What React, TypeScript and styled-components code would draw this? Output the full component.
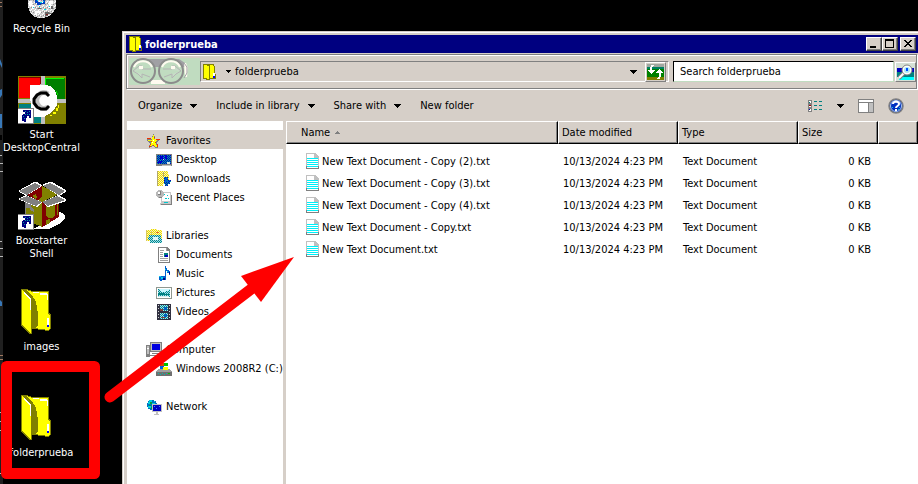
import React from "react";
import styled, { createGlobalStyle, css } from "styled-components";

const face = "#d6cfc8";
const navy = "#000080";
const shade = "#808080";

const GlobalStyle = createGlobalStyle`
  *, *::before, *::after { box-sizing: border-box; }
  body {
    margin: 0;
    background: #000;
    color: #000;
    font: 11px/13px "DejaVu Sans Condensed", "Liberation Sans", sans-serif;
  }
  button, input { font: inherit; color: inherit; }
  svg { display: block; flex: none; }
`;

const Screen = styled.div`
  position: relative;
  display: flex;
  min-height: 100vh;
  background: #000;
  overflow: hidden;
`;

const Edge = styled.div`
  flex: 0 0 3px;
  overflow: hidden;
  background: #202020;
`;

const Desktop = styled.nav`
  flex: 0 0 119px;
  height: 100vh;
  overflow: hidden;
`;

const Shortcuts = styled.ul`
  list-style: none;
  width: 77px;
  margin: -30px 0 0;
  padding: 0;
`;

const ShortcutItem = styled.li`
  height: 106px;
`;

const Shortcut = styled.a`
  display: flex;
  flex-direction: column;
  align-items: center;
  gap: 4px;
  color: #fff;
  text-align: center;
  text-decoration: none;
  white-space: pre-line;
`;

const Window = styled.main`
  flex: 1;
  min-width: 0;
  display: flex;
  flex-direction: column;
  margin-top: 31px;
  padding: 2px 0 0 2px;
  border: solid ${face};
  border-width: 1px 0 0 1px;
  background: ${face};
  box-shadow: inset 1px 1px #fff;
`;

const TitleBar = styled.header`
  display: flex;
  align-items: center;
  gap: 2px;
  height: 18px;
  margin: 1px 0 1px 1px;
  padding: 0 2px;
  background: ${navy};
`;

const Title = styled.h1`
  flex: 1;
  margin: 0;
  color: #fff;
  font-size: 11px;
  font-weight: bold;
`;

const raised = css`
  border: 1px solid;
  border-color: #fff #404040 #404040 #fff;
  background: ${face};
  box-shadow: inset -1px -1px ${shade};
`;

const CaptionButton = styled.button<{ $apart?: boolean }>`
  ${raised}
  display: grid;
  place-items: center;
  width: 16px;
  height: 14px;
  margin-left: ${(p) => (p.$apart ? 2 : 0)}px;
  padding: 0;
`;

const CaptionButtons = styled.div`
  display: flex;
`;

const AddressBand = styled.div`
  display: flex;
  align-items: center;
  height: 35px;
  margin: 0 1px 1px 1px;
  padding-left: 2px;
  border: 1px solid ${shade};
  box-shadow: inset 1px 1px #fff, 1px 1px #fff;
`;

const Travel = styled.div`
  display: flex;
  background: #c0dcc0;
`;

const PlainButton = styled.button`
  display: flex;
  align-items: center;
  gap: 8px;
  padding: 0;
  border: 0;
  background: none;
  white-space: nowrap;
`;

const AddressBox = styled.div`
  flex: 1;
  display: flex;
  align-items: center;
  height: 21px;
  padding: 0 2px 0 1px;
  border: 1px solid;
  border-color: ${shade} #fff #fff ${shade};
`;

const Crumb = styled.a`
  flex: 1;
  margin-left: 4px;
  color: inherit;
  text-decoration: none;
`;

const ToolButton = styled.button`
  ${raised}
  border-color: #fff ${shade} ${shade} #fff;
  box-shadow: none;
  display: grid;
  place-items: center;
  width: 21px;
  height: 20px;
  padding: 0;
`;

const CrumbArrow = styled.div`
  margin-left: 9px;
`;

const SearchForm = styled.form`
  flex: 0 0 243px;
  display: flex;
  align-items: center;
  gap: 1px;
  margin-left: 4px;
`;

const SearchInput = styled.input`
  flex: 1;
  min-width: 0;
  height: 21px;
  padding: 0 6px;
  border: 1px solid;
  border-color: #000 #c0dcc0 #c0dcc0 #000;
  border-radius: 0;
  background: #fff;
  &::placeholder { color: #000; opacity: 1; }
`;

const CommandBar = styled.div`
  display: flex;
  align-items: center;
  gap: 19px;
  height: 31px;
  padding: 0 14px 0 13px;
`;

const ViewTools = styled.div`
  display: flex;
  align-items: center;
  gap: 14px;
  margin-left: auto;
`;

const Body = styled.div`
  flex: 1;
  display: flex;
  gap: 3px;
  padding-left: 2px;
`;

const NavPane = styled.nav`
  flex: 0 0 156px;
  padding-top: 9px;
  background: #fff;
`;

const Group = styled.ul`
  list-style: none;
  margin: 0 0 19px;
  padding: 0;
`;

const Place = styled.a<{ $child?: boolean; $selected?: boolean }>`
  display: flex;
  align-items: center;
  gap: 4px;
  height: 19px;
  padding-top: 2px;
  padding-left: ${(p) => (p.$child ? 29 : 19)}px;
  background: ${(p) => (p.$selected ? face : "none")};
  color: inherit;
  text-decoration: none;
  white-space: nowrap;
`;

const Listing = styled.section`
  flex: 1;
  min-width: 0;
  background: #fff;
`;

const Table = styled.table`
  width: 100%;
  table-layout: fixed;
  border-collapse: separate;
  border-spacing: 0;
  thead::after { content: ""; display: block; height: 6px; }
`;

const Col = styled.col<{ $w?: number }>`
  width: ${(p) => (p.$w ? `${p.$w}px` : "auto")};
`;

const HeadCell = styled.th<{ $wide?: boolean }>`
  height: 23px;
  padding: 0 0 0 ${(p) => (p.$wide ? 14 : 3)}px;
  border: 1px solid;
  border-color: #fff #000 #000 #fff;
  background: ${face};
  box-shadow: inset -1px -1px ${shade};
  font-weight: normal;
  text-align: left;
`;

const SortLabel = styled.span`
  display: flex;
  align-items: center;
  gap: 5px;
`;

const Cell = styled.td<{ $right?: boolean }>`
  height: 22px;
  padding: 0 ${(p) => (p.$right ? 7 : 0)}px 0 5px;
  text-align: ${(p) => (p.$right ? "right" : "left")};
  white-space: nowrap;
`;

const FileName = styled.a`
  display: flex;
  align-items: center;
  gap: 3px;
  padding-left: 15px;
  color: inherit;
  text-decoration: none;
`;

const Markup = styled.svg`
  position: absolute;
  top: 0;
  left: 0;
  pointer-events: none;
`;

/* ---------- drawings ---------- */

const Px = ({ w = 16, h = 16, children }: { w?: number; h?: number; children: React.ReactNode }) => (
  <svg width={w} height={h} viewBox={`0 0 ${w} ${h}`} shapeRendering="crispEdges" aria-hidden="true">
    {children}
  </svg>
);

const Patterns = () => (
  <defs>
    <pattern id="blueDither" width="2" height="2" patternUnits="userSpaceOnUse">
      <path fill="#0000c0" d="M0 0h2v2H0z" />
      <path fill="#00a0a0" d="M0 0h1v1H0zM1 1h1v1H1z" />
    </pattern>
    <pattern id="yellowDither" width="2" height="2" patternUnits="userSpaceOnUse">
      <path fill="#fff6b0" d="M0 0h2v2H0z" />
      <path fill="#e8d800" d="M0 0h1v1H0zM1 1h1v1H1z" />
    </pattern>
    <pattern id="cyanDither" width="2" height="2" patternUnits="userSpaceOnUse">
      <path fill="#a8e0e8" d="M0 0h2v2H0z" />
      <path fill="#008890" d="M0 0h1v1H0zM1 1h1v1H1z" />
    </pattern>
    <pattern id="grayDither" width="4" height="4" patternUnits="userSpaceOnUse">
      <path fill="#d0d0d0" d="M0 0h4v4H0z" />
      <path fill="#fff" d="M0 0h1v1H0zM2 1h1v1H2zM1 3h1v1H1z" />
      <path fill="#909090" d="M3 2h1v1H3zM1 1h1v1H1z" />
    </pattern>
  </defs>
);

const Down = () => (
  <Px w={7} h={4}><path d="M0 0h7v1H0zM1 1h5v1H1zM2 2h3v1H2zM3 3h1v1H3z" /></Px>
);
const SmallDown = () => (
  <Px w={5} h={3}><path d="M0 0h5v1H0zM1 1h3v1H1zM2 2h1v1H2z" /></Px>
);
const SortUp = () => (
  <Px w={5} h={3}><path fill={shade} d="M2 0h1v1H2zM1 1h3v1H1zM0 2h5v1H0z" /></Px>
);

const SmallFolder = () => (
  <Px w={15} h={16}>
    <path fill="#808000" d="M1 0h11v2h1v8h1v5H8v1H4v-1H1z" />
    <path fill="#ff0" d="M2 1h3v13H2zM5 2h2v13H5zM8 1h3v13H8zM11 2h1v9h1v3h-2z" />
    <path fill="#fff" d="M11 9h2v4h-2z" />
    <path fill="#00f" d="M11 12h2v2h-2z" />
  </Px>
);

const BigFolder = () => (
  <Px w={48} h={48}>
    <path fill="#808000" d="M3 1h6l5 2h17v22l2 2v13l-3 3-13-2h-3v5h-2L3 38z" />
    <path fill="#ff0" d="M8 2l6 2h16v22l2 2v12l-2 2-13-2 3-3V26l-2-12-4-7z" />
    <path fill="#ff0" d="M4 2l5 4 4 6v33L4 37z" />
    <path fill="#fff" d="M6 4h1v1h1v1h1v1h1v1h1v1h1v1h1v12h-1V11h-1v-1h-1V9H9V8H8V7H7V6H6zM15 4h6v1h-6zM22 5h7v1h1v6h-1V7h-7zM29 30h2v7h-2z" />
    <path fill="#00f" d="M29 37h2v2h-2z" />
  </Px>
);

const ShortcutArrow = () => (
  <g>
    <path fill="#808080" d="M0 32h16v16H0z" />
    <path fill="#fff" d="M0 33h15v14H0z" />
    <path fill="#000080" d="M5 34h8v8h-2v-2H9v2H8v4H6v-1H4v-4l1-3h2v-2H5z" />
    <path fill="#00a0a0" d="M7 35h1v1H7zM9 36h1v1H9zM11 35h1v1h-1zM11 38h1v1h-1zM7 38h1v1H7zM5 40h1v1H5zM6 42h1v1H6zM9 38h1v1H9z" />
  </g>
);

const RecycleBin = () => (
  <Px w={48} h={48}>
    <Patterns />
    <path fill="#b8b8b8" d="M10 26h28v12l-3 5-4 3-5 2h-6l-5-2-3-4-2-6z" />
    <path fill="url(#grayDither)" d="M10 30h28v8l-3 5-4 3-5 2h-6l-5-2-3-4-2-6z" />
    <path fill="#fff" d="M11 31h3v4h2v4h-2v-3h-3zM31 31h4v3h-2v4h-2zM17 41h6v2h-4v2h-2z" />
    <path fill="#0040c0" d="M17 29h3v3h2v1h3v-3h2v4h-4v1h-4v-2h-2z" />
    <path fill="#00d8e8" d="M19 30h1v1h-1zM22 32h2v1h-2zM25 31h1v1h-1zM26 39h2v1h-2zM15 37h1v1h-1zM31 36h1v1h-1zM21 36h1v1h-1z" />
    <path fill="#666" d="M27 42h4v1h3v1h-4v2h-3zM20 38h3v1h-3zM33 36h2v3h-2z" />
    <path fill="#802020" d="M28 44h2v1h-2z" />
  </Px>
);

const DesktopCentral = () => (
  <Px w={48} h={48}>
    <path fill="#808000" d="M0 0h48v48H0z" />
    <path fill="#c0c0c0" d="M23 0h4v48h-4zM0 23h48v4H0z" />
    <path fill="#f00" d="M1 2h21v7H12v13H1z" />
    <path fill="#800000" d="M1 1h22v1H1zM22 2h1v6h-1z" />
    <path fill="#008000" d="M27 2h20v21H27z" />
    <path fill="#0f0" d="M27 2h19v1H28v6h-1z" />
    <path fill="#008080" d="M1 28h22v19H1z" />
    <path fill="#808000" d="M27 27h20v20H27z" />
    <path fill="#c0c0c0" d="M22 8h5v33h-5z" />
    <path fill="#fff" d="M12 9h17l5 2 3 4 2 5v9l-3 5-5 4-5 3H13z" />
    <path fill="#0d0" d="M39 17h1v2h-1zM38 15h1v2h-1z" />
    <path fill="#ff0" d="M40 29h1v3h-1zM38 32h2v3h-2zM35 36h3v2h-3zM32 39h2v1h-2z" />
    <g fill="none" shapeRendering="auto">
      <path stroke="#c0c0c0" strokeWidth="5" d="M30 18a7 8 0 1 0 0 13" />
      <path stroke="#000" strokeWidth="3" d="M31 20l-3-3h-5l-4 2-3 4v4l3 4 4 2h5l3-3" />
    </g>
    <ShortcutArrow />
  </Px>
);

const Box = () => (
  <Px w={48} h={48}>
    <path fill="#fff" d="M40 30l5 1 2 3v3l-6 5-10 5H15l8-4z" />
    <path fill="#808000" d="M7 18l17 3v24L8 38z" />
    <path fill="#800000" d="M24 20l17-6v21l-17 10z" />
    <path fill="#808000" d="M28 23l9-3v13l-3 3h-3l-3-2zM28 38l4-1v4l-4 2zM39 21h1v12h-1z" />
    <path fill="#808080" d="M7 20h6v5l3 2v3l-4-2v-2H8v10H7z" />
    <path fill="#808000" d="M9 13l15-9 17 8-17 8z" />
    <path fill="#800000" d="M9 13l15-9v10l-4 5z" />
    <path fill="#808000" d="M14 14l4-2 1 3-2 2z" />
    <path fill="#c0c0c0" d="M0 8L17 0l8 3 7-3 16 8v2l-5 4 5 3v2l-18 6-6-4-6 4L0 18v-2l6-3-6-3z" fillRule="evenodd" opacity="0" />
    <path fill="#fff" d="M0 9L16 0h3l5 3-1 2L8 14zM24 3l7-3h3l14 8v2l-7 4zM0 17l8-4 16 7-5 5-3-1zM24 20l16-7 8 4v2l-18 6z" />
    <path fill="#808080" d="M1 9l16-8 6 3-14 9zM25 4l7-3 15 8-6 4zM1 17l8-3 15 6-6 4zM24 20l15-6 8 4-17 6z" />
    <ShortcutArrow />
  </Px>
);

const Lenses = ({ x, w }: { x: number; w: number }) => (
  <svg width={w} height={27} viewBox={`${x} 0 ${w} 27`} aria-hidden="true">
    <path fill="#a0a0a4" d="M8 1h42l6 4v4H4z" />
    <path fill="#fffbf0" d="M22 22h14v4H22zM55 5h2l2 5-1 9h-2z" />
    <path fill="none" stroke="#a0a0a4" d="M55 5l3 4v6l-3 5" />
    <circle cx="14" cy="13" r="12" fill="#c0dcc0" stroke="#8c8c8c" strokeWidth="2" />
    <circle cx="42" cy="13" r="12" fill="#c0dcc0" stroke="#8c8c8c" strokeWidth="2" />
    <path fill="none" stroke="#fffbf0" strokeWidth="2" d="M5 9a10 10 0 0 1 18 0M33 9a10 10 0 0 1 18 0" />
    <path fill="#c8dcc8" stroke="#b4b4b4" d="M4 13l6-5h3v3h9M4 13l5 3 4 4v-4l8 3M52 13l-6-5h-3v3h-9M52 13l-5 3-4 4v-4l-8 3" />
    <path fill="#fffbf0" d="M10 8h4v3h-4zM42 8h4v3h-4z" />
  </svg>
);

const RefreshIcon = () => (
  <Px w={17} h={16}>
    <path fill="#a0a8a0" d="M0 0h17v4H0z" />
    <path fill="#008060" d="M0 3h17v3H0z" />
    <path fill="#008000" d="M0 5h17v8H0z" />
    <path fill="#808000" d="M0 13h17v3H0z" />
    <path fill="#fff" d="M4 1h3v1H6v1H5v3h3v1H7v1H6v1H5v1H4V9H3V8H2V7H1V6h2V3h1zM12 5h1v1h1v1h1v1h1v1h-2v4h-1v2h-3v-1h1v-1h1V9H9V8h1V7h1V6h1z" />
  </Px>
);

const SearchIcon = () => (
  <svg width="19" height="18" viewBox="0 0 19 18" aria-hidden="true">
    <path fill="#d6e0d6" d="M0 0h19v18H0z" />
    <path fill="#0000c0" d="M1 5h17v4H1z" />
    <path fill="#008080" d="M1 9h17v5H1z" />
    <path fill="#0ff" d="M3 14h15v3H3z" />
    <path stroke="#808080" strokeWidth="4" d="M3 15l5-5" />
    <path stroke="#fff" strokeWidth="2" d="M3 15l5-5" />
    <circle cx="11" cy="7" r="5" fill="#fff" stroke="#808080" />
    <circle cx="11" cy="7" r="3" fill="#a8e8f8" />
    <path fill="#0050ff" d="M10 5h2v3h-2z" />
  </svg>
);

const ViewIcon = () => (
  <Px w={15} h={12}>
    <path fill="#808080" d="M0 0h4v4H0zM0 4h4v4H0zM0 8h4v4H0z" />
    <path fill="#fff" d="M1 1h2v2H1zM1 5h2v2H1zM1 9h2v2H1z" />
    <path fill="#008080" d="M1 2h1v1H1zM6 1h3v1H6zM11 1h3v1h-3zM6 5h3v1H6zM11 5h3v1h-3zM6 9h3v1H6zM11 9h3v1h-3z" />
    <path fill="#a00000" d="M1 5h2v1H1z" />
    <path fill="#0000c0" d="M1 9h1v1H1z" />
  </Px>
);

const PaneIcon = () => (
  <Px w={16} h={14}>
    <path fill="#808080" d="M0 0h16v14H0z" />
    <path fill="#fff" d="M1 1h14v2H1zM1 4h9v9H1z" />
    <path fill="#c0c0c0" d="M11 4h4v9h-4z" />
  </Px>
);

const HelpIcon = () => (
  <svg width="16" height="16" viewBox="0 0 16 16" aria-hidden="true">
    <circle cx="8" cy="8" r="7" fill="#0030c0" stroke="#808080" strokeWidth="1.5" />
    <circle cx="8" cy="8" r="5.5" fill="none" stroke="#b0c8e8" />
    <path fill="none" stroke="#fff" strokeWidth="2" d="M5 6c0-3 6-3 6 0 0 2-3 2-3 4" />
    <path fill="#fff" d="M7 11h2v2H7z" />
    <path fill="#00c0e0" d="M4 9h1v1H4zM11 9h1v1h-1zM10 11h1v1h-1z" />
  </svg>
);

const TextFile = () => (
  <Px w={13} h={16}>
    <path fill="#c0c0c0" d="M0 0h9l4 4v12H0z" />
    <path fill="#fff" d="M1 1h7v3h1v1h3v10H1z" />
    <path fill="#808080" d="M0 13h1v3H0zM12 13h1v3h-1zM0 15h13v1H0z" />
    <path fill="#c0c0c0" d="M8 0h1v4h4v1H8zM9 1h1v1H9zM11 3h1v1h-1z" />
    <path fill="#00f0f8" d="M1 5h11v1H1zM1 7h11v1H1zM1 9h11v1H1zM1 11h11v1H1zM1 13h11v1H1z" />
  </Px>
);

const Star = () => (
  <Px>
    <path fill="#808080" d="M7 1h1v2h1v3h5v1h-1v1h-1v1h-1v3h1v3h-3v-1H8v-1H6v1H4v1H3v-3h1v-2H3V9H2V8H1V6h5V3h1z" />
    <path fill="#ff0" d="M7 2h1v4h5v1h-2v1h-1v4h1v2h-2v-1H8v-1H6v1H4v-2h1v-3H4V8H2V7h4V4h1z" />
    <path fill="#f03000" d="M1 5h4v1H1zM8 4h1v1H8zM10 6h4v1h-4zM5 8h1v1H5zM9 9h1v1H9zM4 11h1v1H4zM11 11h1v3h-1zM3 13h2v1H3zM7 12h1v1H7z" />
    <path fill="#fff" d="M7 7h1v1H7zM6 9h1v1H6z" />
  </Px>
);
const DesktopIcon = () => (
  <Px>
    <path fill="#808080" d="M0 2h16v12H0z" />
    <path fill="url(#blueDither)" d="M1 3h14v9H1z" />
    <path fill="#0000d0" d="M4 4h3v3H4zM9 3h2v4H9zM2 9h4v2H2z" />
    <path fill="#d0e8e8" d="M11 10h3v2h-3zM7 7h1v1H7z" />
    <path fill="#c0c0c0" d="M6 13h9v1H6z" />
  </Px>
);
const Downloads = () => (
  <Px>
    <path fill="url(#yellowDither)" d="M1 0h11v3h1v10H7v2H1z" />
    <path fill="#b0a870" d="M1 0h1v15H1zM7 1h1v5H7z" />
    <path fill="url(#blueDither)" d="M8 6h4v3h3v2h-1v2h-2v2H9v-2H8z" />
    <path fill="#0060d0" d="M9 7h2v3H9zM8 10h5v1H8z" />
  </Px>
);
const Recent = () => (
  <Px>
    <path fill="#c8c8c8" d="M5 2h10v10h1v3H4v-2h1z" />
    <path fill="#fff" d="M6 3h8v8H6z" />
    <circle cx="4" cy="4" r="4" fill="#b8b8b8" />
    <path fill="#fff" d="M2 2h3v3H2z" />
    <path fill="#808080" d="M4 1h1v4H2V4h2zM15 5h1v10H5v-1h10zM3 7h3v1H3z" />
    <path fill="#00c8d0" d="M8 4h1v1H8zM11 5h1v1h-1zM9 8h2v1H9zM8 12h4v1H8zM12 8h1v1h-1z" />
  </Px>
);
const Libraries = () => (
  <Px>
    <path fill="url(#yellowDither)" d="M0 2h5V1h6v1h5v11H0z" />
    <path fill="#d8c860" d="M0 2h1v11H0zM5 3h1v4H5z" />
    <path fill="url(#cyanDither)" d="M3 7h12v4h1v4H4v-3H2z" />
    <path fill="#e0f8f8" d="M7 9h5v3H7z" />
    <path fill="#e07020" d="M10 4h3v1h-3z" />
  </Px>
);
const DocumentIcon = () => (
  <Px>
    <path fill="#808080" d="M2 0h9l3 3v13H2z" />
    <path fill="#fff" d="M3 1h7v3h3v11H3z" />
    <path fill="#a0a0a0" d="M10 1h1v3H10zM4 3h4v1H4zM4 5h3v1H4zM4 7h3v1H4zM4 9h3v1H4zM4 11h8v1H4zM4 13h8v1H4z" />
    <path fill="#008080" d="M8 6h4v4H8z" />
    <path fill="#0000c0" d="M9 8h3v2H9z" />
  </Px>
);
const Music = () => (
  <Px>
    <path fill="#0060d0" d="M9 0h1v2h1v2h2v1h1v4h-1V7h-2V5h-1v9H6v1H4v-1H3v-3h2v-1h4z" />
    <path fill="#00d0e8" d="M5 11h2v2H5zM11 5h1v1h-1zM9 3h1v1H9zM3 10h2v1H3z" />
    <path fill="#000080" d="M7 12h2v2H7zM13 6h1v2h-1z" />
  </Px>
);
const Pictures = () => (
  <Px>
    <path fill="#909890" d="M0 2h16v12H0z" />
    <path fill="#fff" d="M1 3h14v10H1z" />
    <path fill="url(#cyanDither)" d="M2 4h12v8H2z" />
    <path fill="#c8f8ff" d="M4 4h9v2h-3v1H5V6H4z" />
    <path fill="#008080" d="M2 8h7v1h5v1H2z" />
    <path fill="#d8f0f0" d="M3 11h10v1H3z" />
  </Px>
);
const Videos = () => (
  <Px>
    <path fill="#303040" d="M1 0h14v16H1z" />
    <path fill="#d0d0d0" d="M2 1h1v1H2zM2 4h1v1H2zM2 7h1v1H2zM2 10h1v1H2zM2 13h1v1H2zM13 1h1v1h-1zM13 4h1v1h-1zM13 7h1v1h-1zM13 10h1v1h-1zM13 13h1v1h-1z" />
    <path fill="url(#cyanDither)" d="M4 1h8v6H4zM4 9h8v6H4z" />
    <path fill="#804040" d="M4 5h3v2H4zM5 13h4v1H5z" />
    <path fill="#0060c0" d="M8 3h3v3H8zM8 10h3v3H8z" />
  </Px>
);
const Computer = () => (
  <Px>
    <path fill="#808080" d="M4 0h12v10H4zM0 3h4v12H0zM6 11h8v1H6zM4 13h11v1H4z" />
    <path fill="#c0c0c0" d="M5 1h10v8H5zM1 4h2v8H1z" />
    <path fill="#0000e0" d="M6 2h8v6H6z" />
    <path fill="#fff" d="M1 6h2v1H1z" />
  </Px>
);
const Drive = () => (
  <Px>
    <path fill="#a0a0a0" d="M2 8h12l2 3v4H0v-4z" />
    <path fill="#707070" d="M0 11h16v4H0z" />
    <path fill="#00c0b0" d="M2 12h1v1H2zM4 13h1v1H4zM6 12h1v1H6zM8 13h1v1H8zM10 12h1v1h-1z" />
    <path fill="#00c000" d="M12 12h2v1h-2zM8 2h4v3H8z" />
    <path fill="#e04000" d="M4 2h4v3H4z" />
    <path fill="#0060e0" d="M4 5h4v3H4z" />
    <path fill="#ff0" d="M7 6h5v3H7z" />
  </Px>
);
const Network = () => (
  <Px>
    <circle cx="6" cy="6" r="5" fill="#0070c0" />
    <path fill="#00d0e0" d="M3 1h3v2H4v2H2V3h1zM6 4h3v2H6zM2 7h3v2H2zM8 2h1v1H8z" />
    <path fill="#00a040" d="M4 3h2v2H4zM3 6h2v1H3zM5 8h2v2H5z" />
    <path fill="#c0c0c0" d="M6 5h10v8H6zM10 13h2v2h-2zM8 15h5v1H8z" />
    <path fill="#0000c0" d="M7 6h8v6H7z" />
    <path fill="#4080ff" d="M8 7h1v1H8zM10 9h1v1h-1zM13 7h1v1h-1z" />
  </Px>
);

const EdgeArt = () => (
  <svg width="3" height="484" viewBox="0 0 3 484" aria-hidden="true">
    <path fill="#a07860" d="M0 2h2v1H0zM0 6h2v1H0zM0 355h3v1H0zM0 359h3v1H0z" />
    <path fill="#3878b8" d="M0 59l2 5v4l-2-4zM0 90l2-1v6l-2 3zM0 114h2v14H0zM0 300l2 2v4H0z" />
    <path fill="#b8b8b8" d="M0 155h2v1H0zM0 163h3v1H0zM0 171h3v1H0zM0 241h2v1H0zM0 248h3v1H0zM0 256h3v1H0zM0 412h2v1H0zM0 421h2v1H0zM0 430h2v1H0zM0 473h2v1H0z" />
    <path fill="#000" d="M0 135h2v5H0z" />
  </svg>
);

/* ---------- data ---------- */

const shortcuts = [
  { label: "Recycle Bin", Icon: RecycleBin },
  { label: "Start\nDesktopCentral", Icon: DesktopCentral },
  { label: "Boxstarter\nShell", Icon: Box },
  { label: "images", Icon: BigFolder },
  { label: "folderprueba", Icon: BigFolder },
];

const groups = [
  [
    { label: "Favorites", Icon: Star },
    { label: "Desktop", Icon: DesktopIcon },
    { label: "Downloads", Icon: Downloads },
    { label: "Recent Places", Icon: Recent },
  ],
  [
    { label: "Libraries", Icon: Libraries },
    { label: "Documents", Icon: DocumentIcon },
    { label: "Music", Icon: Music },
    { label: "Pictures", Icon: Pictures },
    { label: "Videos", Icon: Videos },
  ],
  [
    { label: "Computer", Icon: Computer },
    { label: "Windows 2008R2 (C:)", Icon: Drive },
  ],
  [{ label: "Network", Icon: Network }],
];

const files = [
  "New Text Document - Copy (2).txt",
  "New Text Document - Copy (3).txt",
  "New Text Document - Copy (4).txt",
  "New Text Document - Copy.txt",
  "New Text Document.txt",
];

export default function App() {
  return (
    <Screen>
      <GlobalStyle />
      <Edge><EdgeArt /></Edge>
      <Desktop aria-label="Desktop">
        <Shortcuts>
          {shortcuts.map(({ label, Icon }) => (
            <ShortcutItem key={label}>
              <Shortcut href="#"><Icon />{label}</Shortcut>
            </ShortcutItem>
          ))}
        </Shortcuts>
      </Desktop>

      <Window>
        <TitleBar>
          <SmallFolder />
          <Title>folderprueba</Title>
          <CaptionButtons>
            <CaptionButton aria-label="Minimize"><Px w={12} h={10}><path d="M2 7h6v2H2z" /></Px></CaptionButton>
            <CaptionButton aria-label="Maximize"><Px w={12} h={10}><path d="M1 0h9v9H1zM2 2v6h7V2z" fillRule="evenodd" /></Px></CaptionButton>
            <CaptionButton aria-label="Close" $apart>
              <Px w={12} h={10}><path d="M2 1h2v1h1v1h2V2h1V1h2v1H9v1H8v1H7v1h1v1h1v1h1v1H8V7H7V6H5v1H4v1H2V7h1V6h1V5h1V4H4V3H3V2H2z" /></Px>
            </CaptionButton>
          </CaptionButtons>
        </TitleBar>

        <AddressBand>
          <Travel>
            <PlainButton aria-label="Back"><Lenses x={0} w={28} /></PlainButton>
            <PlainButton aria-label="Forward"><Lenses x={28} w={43} /></PlainButton>
          </Travel>
          <AddressBox>
            <SmallFolder />
            <CrumbArrow><SmallDown /></CrumbArrow>
            <Crumb href="#">folderprueba</Crumb>
            <PlainButton aria-label="Previous locations">
              <Down />
              <span />
            </PlainButton>
            <ToolButton aria-label="Refresh"><RefreshIcon /></ToolButton>
          </AddressBox>
          <SearchForm>
            <SearchInput aria-label="Search folderprueba" placeholder="Search folderprueba" />
            <ToolButton aria-label="Search"><SearchIcon /></ToolButton>
          </SearchForm>
        </AddressBand>

        <CommandBar>
          <PlainButton>Organize<Down /></PlainButton>
          <PlainButton>Include in library<Down /></PlainButton>
          <PlainButton>Share with<Down /></PlainButton>
          <PlainButton>New folder</PlainButton>
          <ViewTools>
            <PlainButton aria-label="Change view"><ViewIcon /></PlainButton>
            <PlainButton aria-label="More view options"><Down /></PlainButton>
            <PlainButton aria-label="Preview pane"><PaneIcon /></PlainButton>
            <PlainButton aria-label="Help"><HelpIcon /></PlainButton>
          </ViewTools>
        </CommandBar>

        <Body>
          <NavPane aria-label="Places">
            {groups.map((group) => (
              <Group key={group[0].label}>
                {group.map(({ label, Icon }, i) => (
                  <li key={label}>
                    <Place href="#" $child={i > 0} $selected={label === "Favorites"}><Icon />{label}</Place>
                  </li>
                ))}
              </Group>
            ))}
          </NavPane>
          <Listing>
            <Table>
              <colgroup><Col /><Col $w={120} /><Col $w={120} /><Col $w={80} /><Col $w={40} /></colgroup>
              <thead>
                <tr>
                  <HeadCell $wide aria-sort="ascending"><SortLabel>Name<SortUp /></SortLabel></HeadCell>
                  <HeadCell>Date modified</HeadCell>
                  <HeadCell>Type</HeadCell>
                  <HeadCell>Size</HeadCell>
                  <HeadCell aria-label="Other" />
                </tr>
              </thead>
              <tbody>
                {files.map((name) => (
                  <tr key={name}>
                    <Cell><FileName href="#"><TextFile />{name}</FileName></Cell>
                    <Cell>10/13/2024 4:23 PM</Cell>
                    <Cell>Text Document</Cell>
                    <Cell $right>0 KB</Cell>
                    <Cell />
                  </tr>
                ))}
              </tbody>
            </Table>
          </Listing>
        </Body>
      </Window>

      <Markup width="300" height="484" viewBox="0 0 300 484" aria-hidden="true">
        <rect x="6.5" y="366.5" width="88" height="107" fill="none" stroke="#f00" strokeWidth="11" strokeLinejoin="round" />
        <path stroke="#f00" strokeWidth="11" strokeLinecap="round" d="M110 397L255 286" />
        <path fill="#f00" d="M294 257L241 276L261 302z" />
      </Markup>
    </Screen>
  );
}
